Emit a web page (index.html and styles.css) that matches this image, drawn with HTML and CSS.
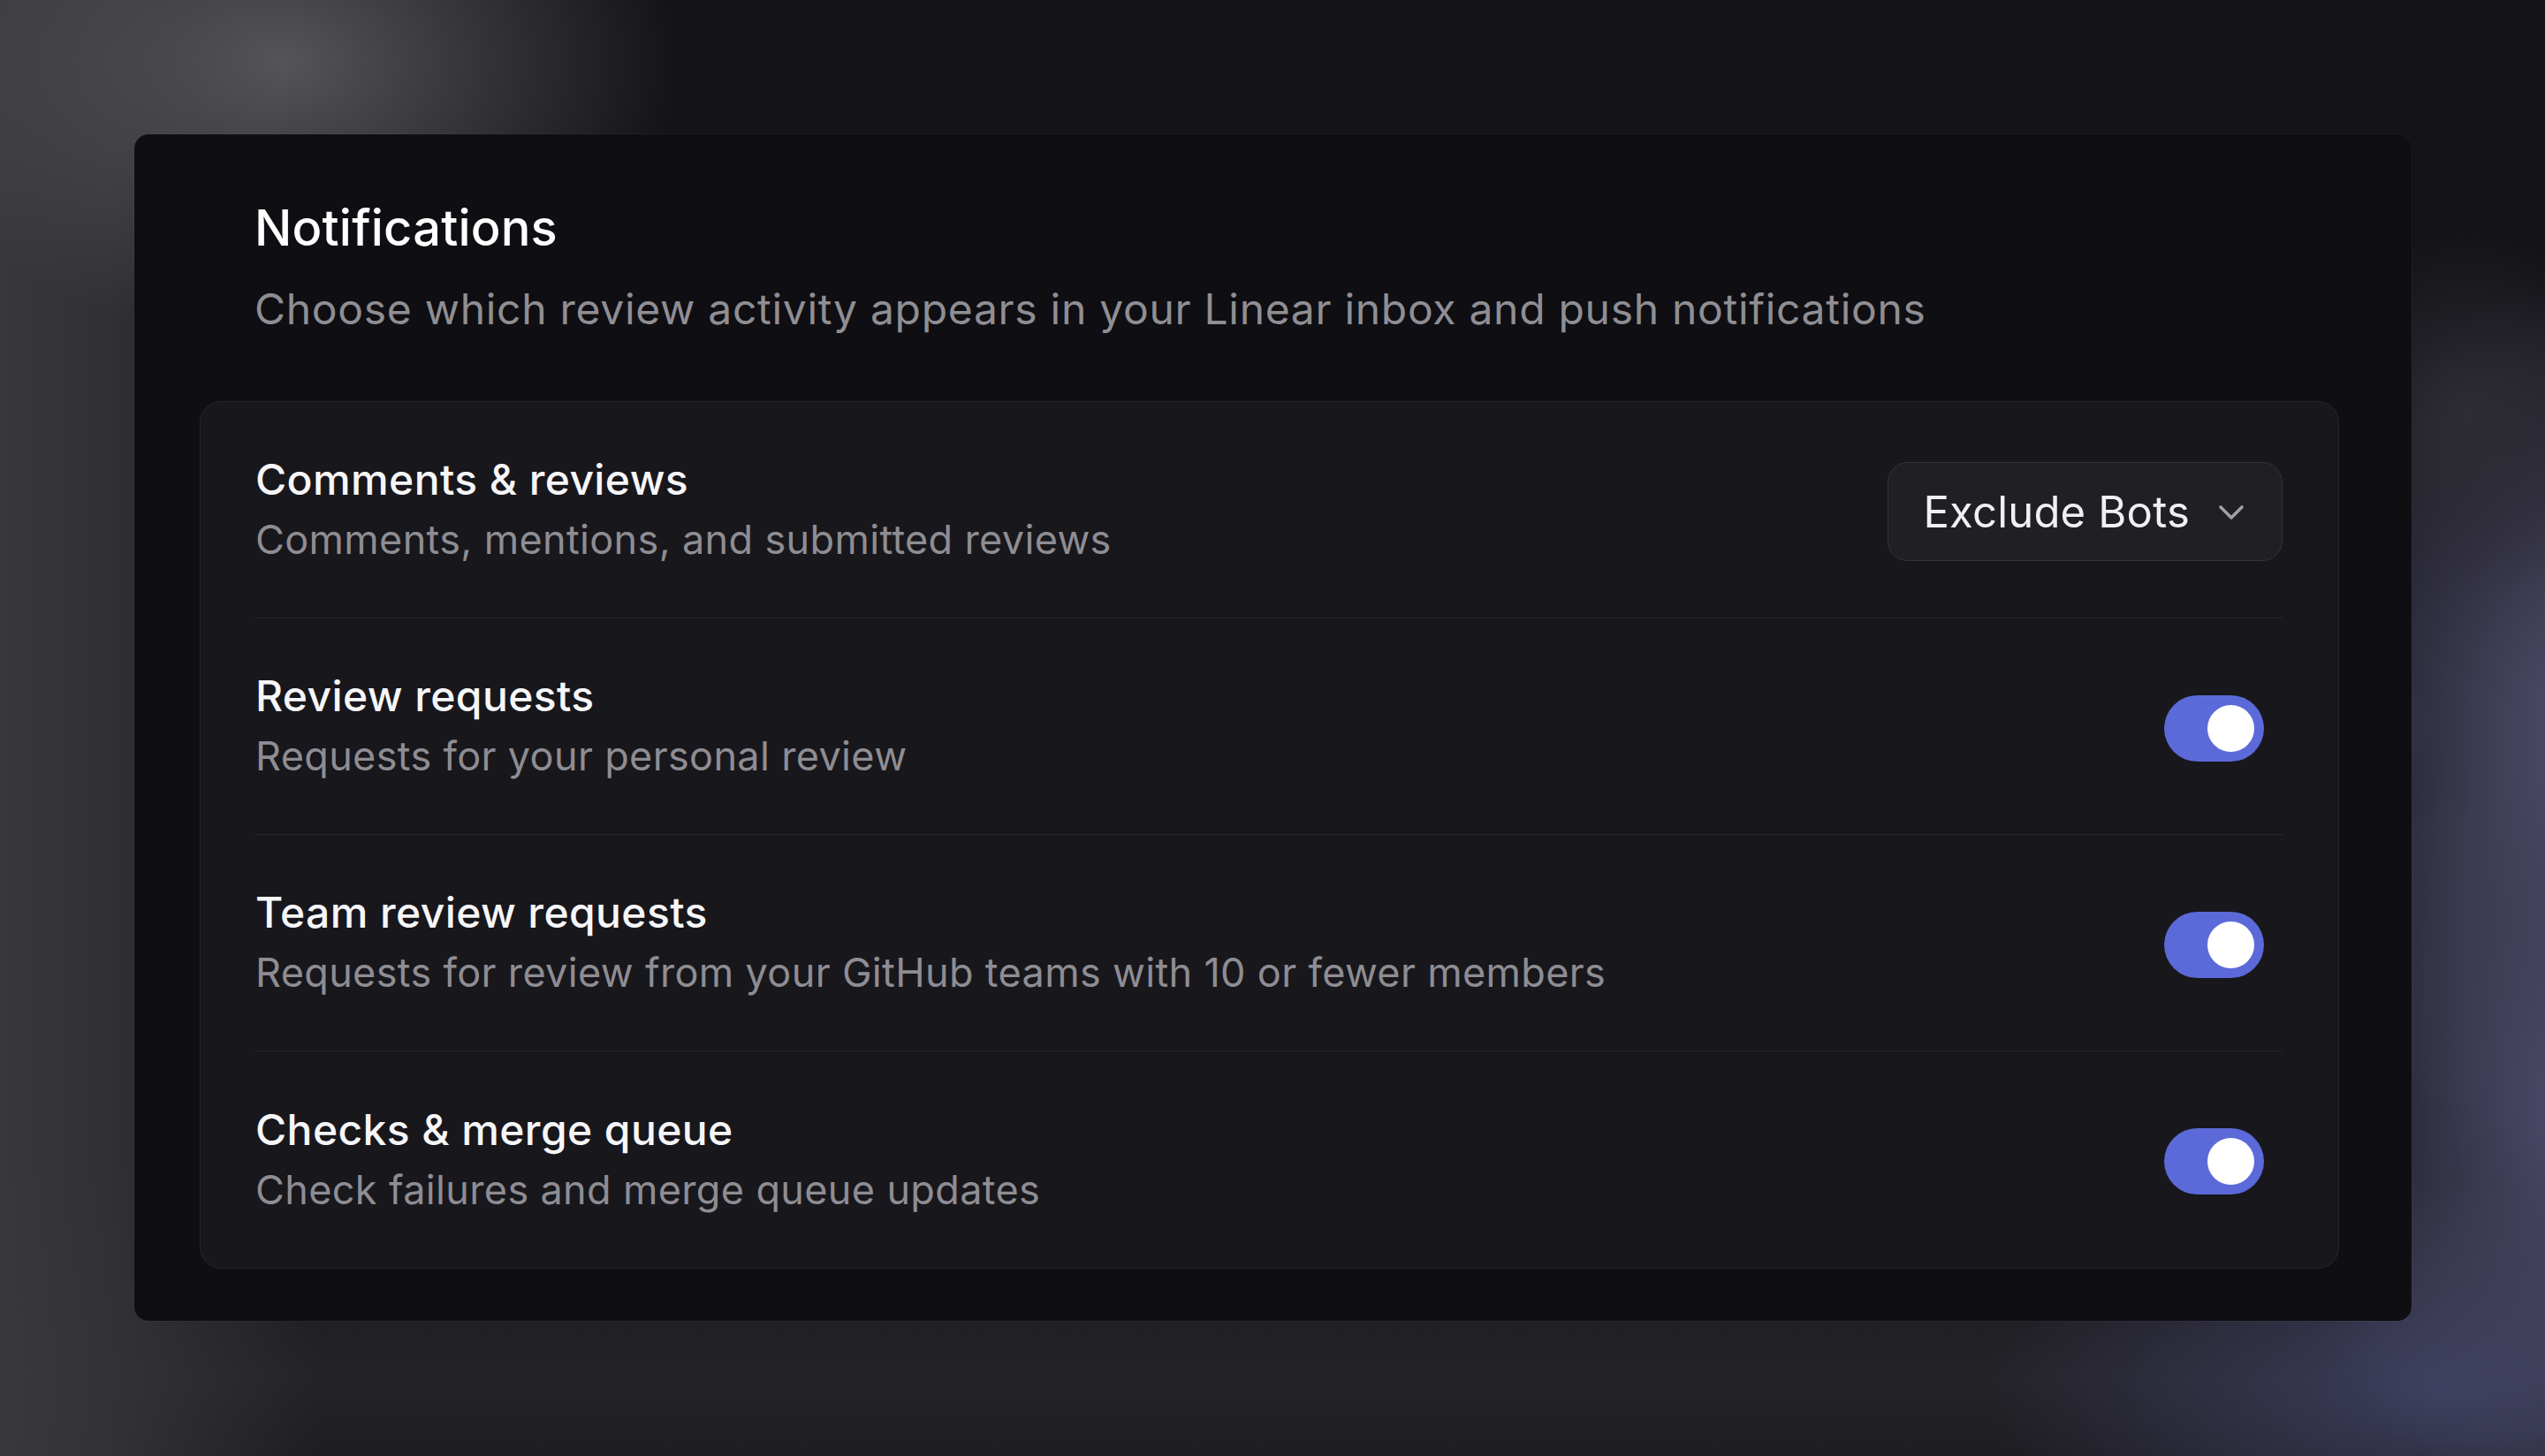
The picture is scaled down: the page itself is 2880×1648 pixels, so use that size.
FILE: index.html
```html
<!DOCTYPE html>
<html lang="en">
<head>
    <meta charset="UTF-8">
    <meta name="viewport" content="width=device-width, initial-scale=1.0">
    <title>Notifications</title>
    <link rel="stylesheet" href="styles.css">
</head>
<body>
    <div class="stage">
        <div class="panel">
            <h1 class="title">Notifications</h1>
            <p class="subtitle">Choose which review activity appears in your Linear inbox and push notifications</p>

            <div class="card">
                <div class="row">
                    <div class="row-text">
                        <div class="row-title">Comments &amp; reviews</div>
                        <div class="row-desc">Comments, mentions, and submitted reviews</div>
                    </div>
                    <button class="select">
                        <span>Exclude Bots</span>
                        <svg class="chevron" viewBox="0 0 30 18" width="30" height="18">
                            <path d="M3 3l12 12 12-12" fill="none" stroke="currentColor" stroke-width="3.6" stroke-linecap="round" stroke-linejoin="round"/>
                        </svg>
                    </button>
                </div>
                <div class="row">
                    <div class="row-text">
                        <div class="row-title">Review requests</div>
                        <div class="row-desc">Requests for your personal review</div>
                    </div>
                    <div class="toggle on"><span class="knob"></span></div>
                </div>
                <div class="row">
                    <div class="row-text">
                        <div class="row-title">Team review requests</div>
                        <div class="row-desc">Requests for review from your GitHub teams with 10 or fewer members</div>
                    </div>
                    <div class="toggle on"><span class="knob"></span></div>
                </div>
                <div class="row">
                    <div class="row-text">
                        <div class="row-title">Checks &amp; merge queue</div>
                        <div class="row-desc">Check failures and merge queue updates</div>
                    </div>
                    <div class="toggle on"><span class="knob"></span></div>
                </div>
            </div>
        </div>
    </div>
</body>
</html>
```

FILE: styles.css
```css
html, body {
    margin: 0;
    padding: 0;
}
body {
    width: 2880px;
    height: 1648px;
    overflow: hidden;
    font-family: 'Inter', 'Noto Sans', sans-serif;
    color: #f4f4f6;
    /* blurred desktop behind the panel */
    background:
        radial-gradient(ellipse 560px 400px at 320px 70px, rgba(88, 87, 92, 0.95), rgba(88, 87, 92, 0) 80%),
        radial-gradient(ellipse 240px 260px at 2790px 470px, rgba(48, 45, 52, 0.9), rgba(48, 45, 52, 0) 80%),
        radial-gradient(ellipse 420px 560px at 2940px 820px, rgba(82, 82, 114, 1), rgba(82, 82, 114, 0) 90%),
        radial-gradient(ellipse 420px 500px at 2940px 1270px, rgba(80, 80, 114, 1), rgba(80, 80, 114, 0) 90%),
        radial-gradient(ellipse 640px 290px at 2760px 1570px, rgba(62, 64, 98, 0.9), rgba(62, 64, 98, 0) 80%),
        linear-gradient(90deg, rgba(58, 57, 62, 0.95) 0px, rgba(54, 53, 58, 0.85) 120px, rgba(40, 39, 44, 0) 360px),
        linear-gradient(180deg, #141318 0px, #141318 1300px, #242328 1560px, #1e1d22 1648px);
}

.stage {
    padding: 152px 151px 0 152px;
}

.panel {
    width: 2577px;
    box-sizing: border-box;
    padding: 72px 82px 59px 74px;
    background: #0f0e12;
    border-radius: 16px;
    box-shadow: 0 0 0 1px rgba(255, 255, 255, 0.03);
}

.title {
    margin: 0 0 26px 62px;
    font-size: 56px;
    line-height: 68px;
    font-weight: 500;
    letter-spacing: 0.2px;
    color: #ffffff;
}

.subtitle {
    margin: 0 0 72px 62px;
    font-size: 48px;
    line-height: 64px;
    letter-spacing: 0.7px;
    color: #8f8e94;
}

.card {
    background: #18171c;
    border: 1px solid #26252a;
    border-radius: 24px;
    padding: 0 63px 0 62px;
}

.row {
    display: flex;
    align-items: center;
    justify-content: space-between;
    height: 244px;
    border-bottom: 1px solid #28272c;
}
.row:last-child {
    border-bottom: none;
    height: 245px;
}

.row-title {
    font-size: 48px;
    line-height: 64px;
    font-weight: 500;
    letter-spacing: 0.4px;
    color: #f6f6f8;
}
.row-desc {
    margin-top: 4px;
    font-size: 45px;
    line-height: 64px;
    letter-spacing: 0.35px;
    color: #8e8d93;
}

.select {
    display: flex;
    align-items: center;
    gap: 32px;
    height: 112px;
    box-sizing: border-box;
    padding: 0 42px 0 39px;
    margin-top: 4px;
    background: #201f24;
    border: 1px solid #35343a;
    border-radius: 23px;
    font-family: inherit;
    font-size: 49px;
    letter-spacing: 0.2px;
    color: #f0f0f2;
}
.chevron {
    margin-top: 2px;
    color: #a09fa5;
}

.toggle {
    position: relative;
    width: 113px;
    height: 75px;
    margin-right: 21px;
    margin-top: 4px;
    border-radius: 38px;
    background: #3a393f;
}
.toggle.on {
    background: #5b6ad8;
}
.knob {
    position: absolute;
    top: 11px;
    right: 11px;
    width: 53px;
    height: 53px;
    border-radius: 50%;
    background: #ffffff;
}
```
